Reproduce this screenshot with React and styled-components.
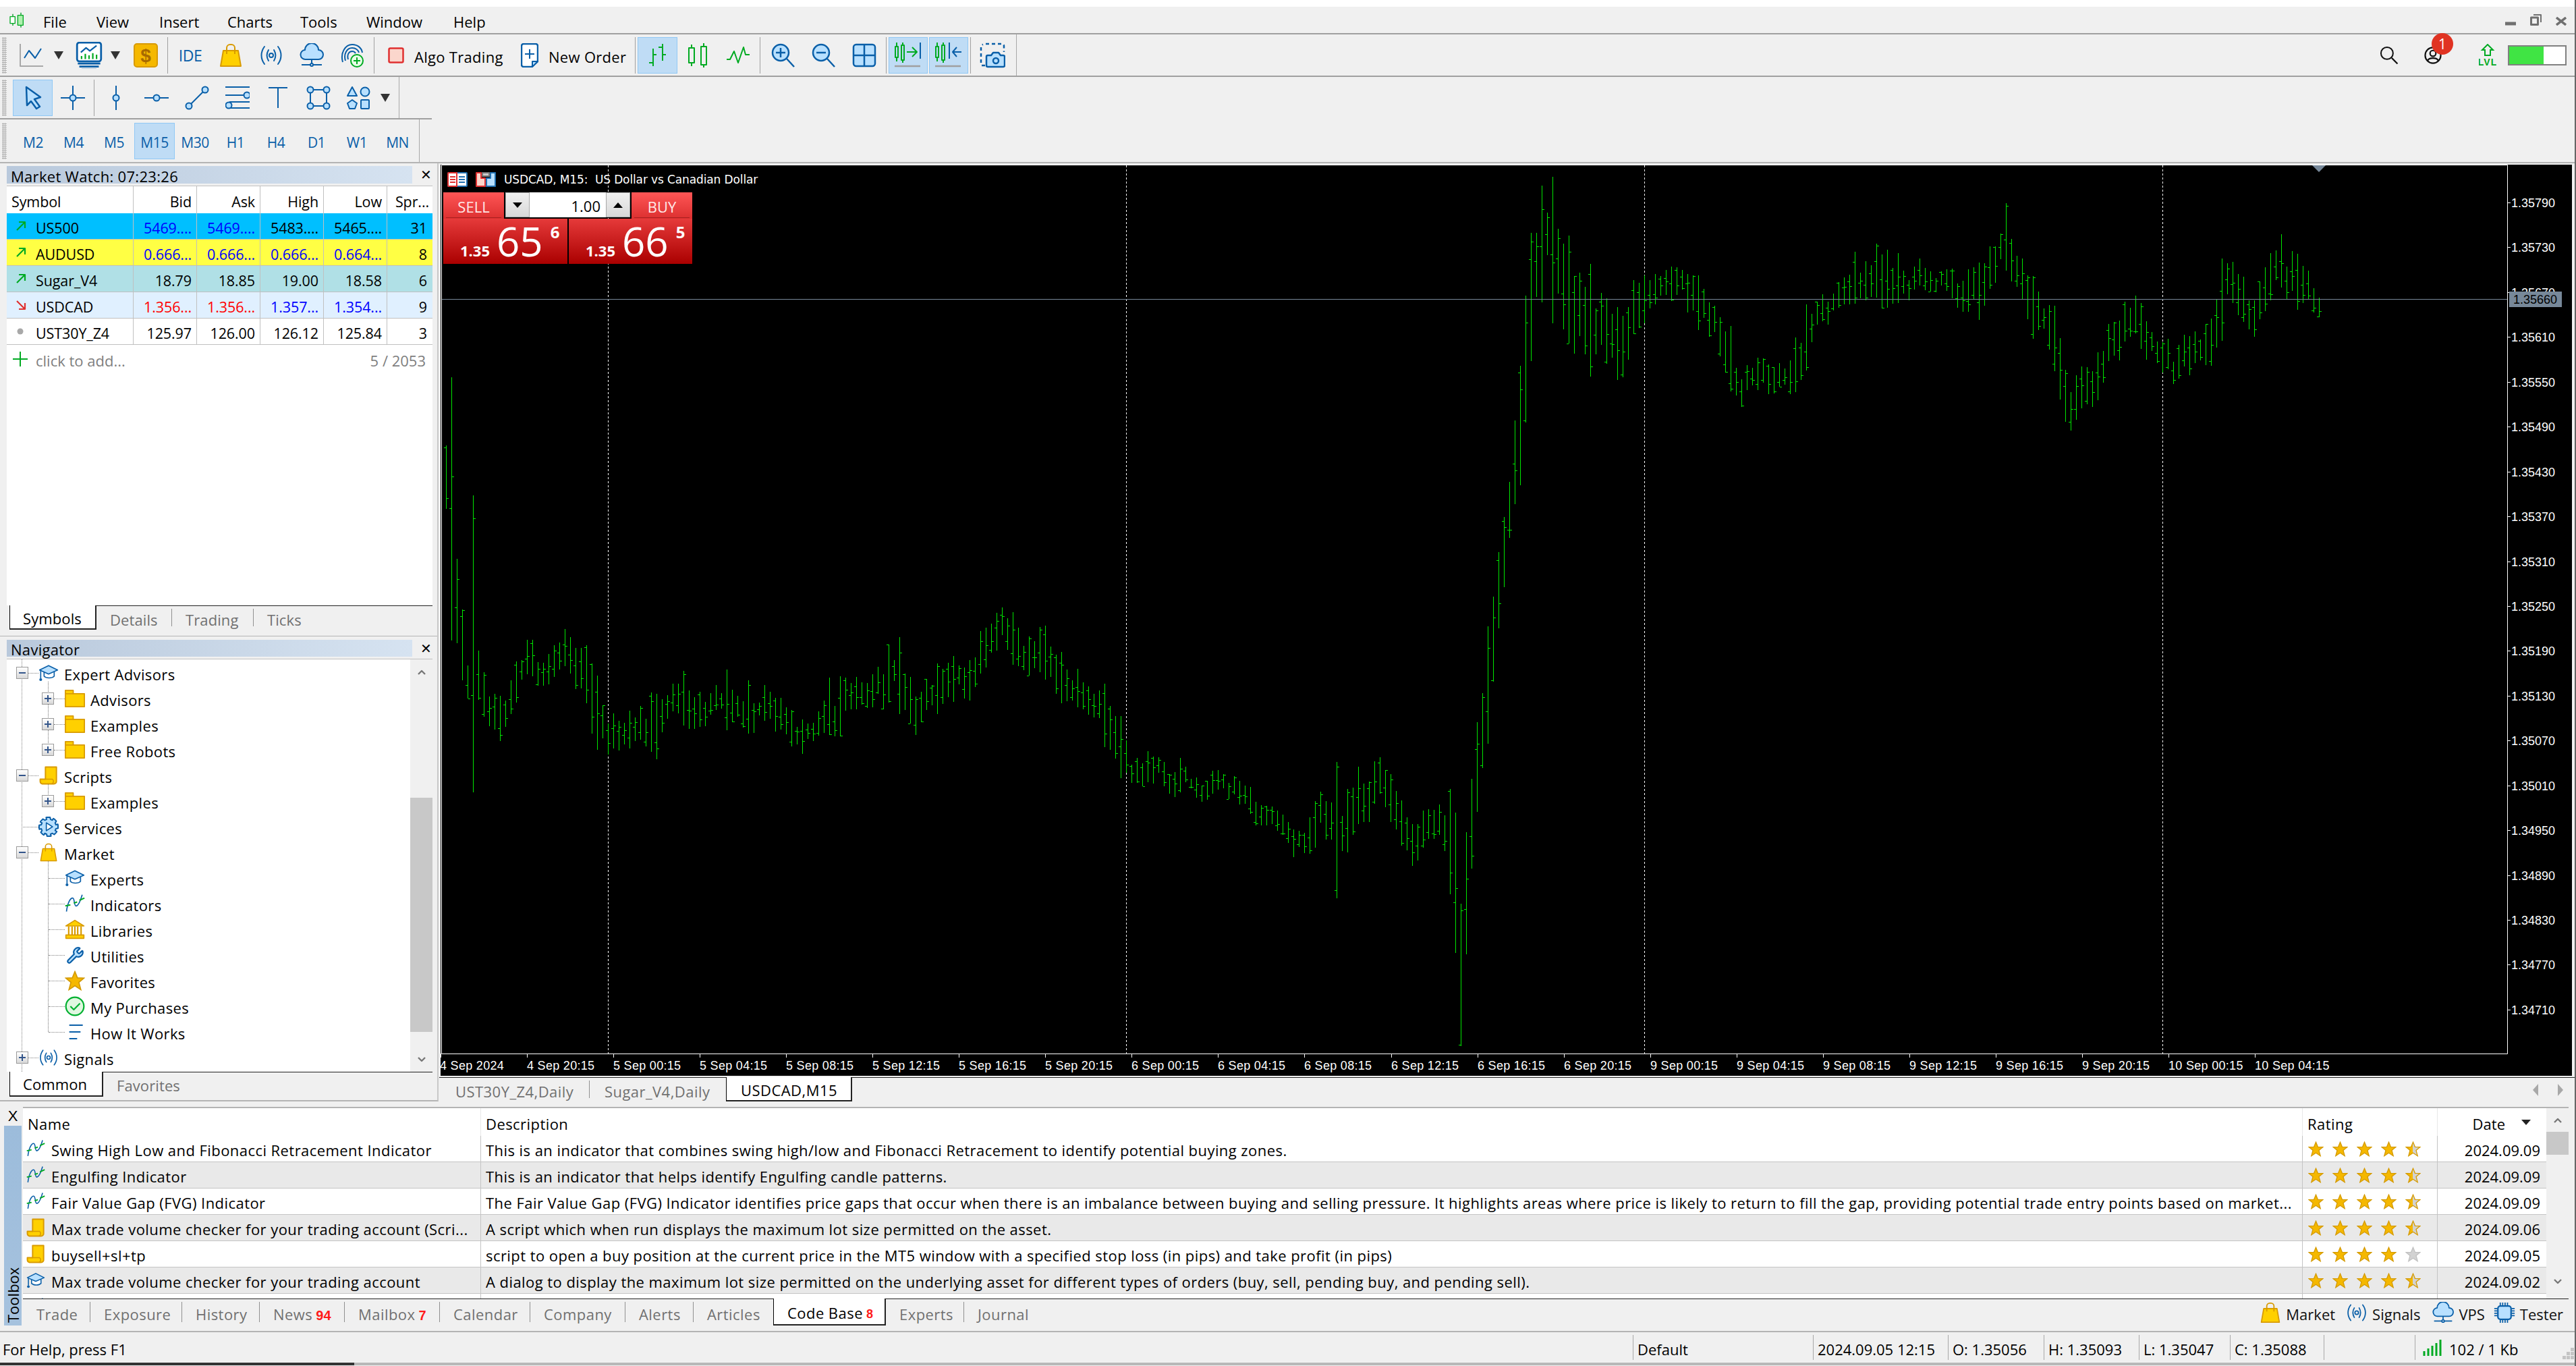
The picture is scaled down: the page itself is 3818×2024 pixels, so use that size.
import React from "react"
import styled, { createGlobalStyle } from "styled-components"
import { Wrench } from "lucide-react"

const UI_FONT = `"Open Sans", "Noto Sans", "Liberation Sans", sans-serif`
const BLUE = "#0a5fa8"
const SKY = "#b8e0ff"
const GREEN = "#00aa22"
const GOLD = "#ffd000"
const GOLD_LINE = "#d89a00"

const GlobalStyle = createGlobalStyle`
  html, body {
    margin: 0;
    padding: 0;
    background: #f0f0f0;
  }
  body {
    font-family: ${UI_FONT};
    font-size: 22px;
    color: #000;
    overflow: hidden;
  }
`

// window frame
const Window = styled.div`
  width: 3818px;
  height: 2024px;
  box-sizing: border-box;
  border-right: 2px solid #666;
  display: flex;
  flex-direction: column;
  background: #f0f0f0;
`
const TopStrip = styled.div`
  height: 10px;
  background: #fff;
`
const MenuBar = styled.div`
  height: 39px;
  box-sizing: border-box;
  display: flex;
  align-items: center;
  padding: 4px 0 0 13px;
`
const MenuItem = styled.span`
  font-size: 22px;
  width: ${p => p.$w}px;
  svg {
    display: block;
    margin-top: -4px;
  }
`
const WindowControls = styled.div`
  margin-left: auto;
  margin-right: 12px;
  display: flex;
  align-items: flex-end;
  gap: 21px;
  height: 20px;
  margin-top: -7px;
`

// toolbars
const ToolbarRow = styled.div`
  height: 65px;
  box-sizing: border-box;
  border-top: 2px solid #a0a0a0;
  border-bottom: 2px solid #a0a0a0;
  display: flex;
  align-items: stretch;
`
const Toolbar = styled.div`
  width: ${p => p.$w}px;
  height: ${p => p.$h || 61}px;
  box-sizing: border-box;
  display: flex;
  align-items: center;
  border-right: 1px solid #a8a8a8;
  flex: none;
`
const ToolbarStack = styled.div`
  height: 63px;
  box-sizing: border-box;
  border-bottom: ${p => (p.$last ? "none" : "2px solid #a0a0a0")};
  width: ${p => p.$w}px;
  display: flex;
`
const Grip = styled.div`
  width: 7px;
  height: 54px;
  margin: 0 ${p => p.$after}px 0 3px;
  flex: none;
  background-image: radial-gradient(#b0b0b0 1px, transparent 1.2px);
  background-size: 3px 3px;
`
const Tool = styled.div`
  width: ${p => p.$w || 60}px;
  height: 54px;
  box-sizing: border-box;
  flex: none;
  display: flex;
  align-items: center;
  justify-content: center;
  gap: 15px;
  margin-left: ${p => p.$ml || 0}px;
  background: ${p => (p.$active ? "#bfdcf5" : "transparent")};
  border: 1px solid ${p => (p.$active ? "#90c8f5" : "transparent")};
`
const TimeTool = styled(Tool)`
  color: ${BLUE};
  font-size: 21px;
  letter-spacing: -0.5px;
  padding-top: 4px;
`
const TextTool = styled(Tool)`
  justify-content: flex-start;
  padding: 4px 0 0 ${p => p.$pl}px;
  font-size: 22px;
  letter-spacing: 0.3px;
  svg {
    margin-top: -4px;
  }
`
const IdeLabel = styled.span`
  color: ${BLUE};
  font-size: 23px;
  letter-spacing: -0.5px;
`
const Separator = styled.div`
  width: 1px;
  height: 54px;
  background: #a0a0a0;
  flex: none;
  margin: 0 ${p => p.$r || 2}px 0 ${p => p.$l || 2}px;
`
const DropArrow = styled.div`
  width: 0;
  height: 0;
  border-left: 7px solid transparent;
  border-right: 7px solid transparent;
  border-top: 12px solid #333;
  margin: 0 ${p => p.$r}px 0 ${p => p.$l}px;
  flex: none;
`
const Actions = styled.div`
  margin-left: auto;
  padding-right: 12px;
  display: flex;
  align-items: center;
  height: 61px;
  box-sizing: border-box;
`
const UserWrap = styled.div`
  position: relative;
  width: 26px;
  height: 26px;
  margin: 0 55px 0 38px;
`
const Badge = styled.div`
  position: absolute;
  left: 11px;
  top: -20px;
  width: 32px;
  height: 32px;
  border-radius: 50%;
  background: #e03322;
  color: #fff;
  font-size: 21px;
  display: flex;
  align-items: center;
  justify-content: center;
`
const Level = styled.div`
  width: 87px;
  height: 30px;
  margin-left: 17px;
  box-sizing: border-box;
  border: 2px solid #808080;
  background: #fff;
`
const LevelFill = styled.div`
  height: 100%;
  background: #40e444;
`

// main area
const Main = styled.div`
  height: 1392px;
  display: flex;
  border-top: 2px solid #b4b4b4;
  box-sizing: border-box;
`
const Sidebar = styled.div`
  width: 650px;
  box-sizing: border-box;
  padding: 4px 7px 0 10px;
  border-right: 2px solid #c8c8c8;
  border-bottom: 2px solid #b4b4b4;
  flex: none;
  display: flex;
  flex-direction: column;
`
const PanelTitle = styled.div`
  height: ${p => p.$h}px;
  display: flex;
  align-items: center;
  flex: none;
  margin-bottom: 3px;
`
const TitleBar = styled.div`
  width: 604px;
  height: 100%;
  display: flex;
  align-items: center;
  padding: 3px 0 0 6px;
  box-sizing: border-box;
  font-size: 22px;
  letter-spacing: 0.3px;
  background: linear-gradient(90deg, #b9c9dc, #d6e3f1);
`
const CloseMark = styled.div`
  margin-left: 10px;
  font-family: "Liberation Sans", sans-serif;
  font-size: 20px;
  width: 20px;
  text-align: center;
`
const WatchBox = styled.div`
  height: 622px;
  background: #fff;
  border-top: 1px solid #c0c0c0;
  box-sizing: border-box;
  flex: none;
`
const WatchRow = styled.div`
  display: grid;
  grid-template-columns: 188px 94px 94px 94px 94px 69px;
  height: ${p => p.$h || 39}px;
  box-sizing: border-box;
  background: ${p => p.$bg || "#fff"};
  border-bottom: ${p => (p.$head ? "none" : "1px solid #c0c0c0")};
`
const WatchCell = styled.div`
  display: flex;
  align-items: center;
  justify-content: ${p => (p.$left ? "flex-start" : "flex-end")};
  padding: 4px ${p => (p.$left ? 0 : p.$pr || 7)}px 0 ${p => (p.$left ? p.$pl || 7 : 0)}px;
  color: ${p => p.$c || "#000"};
  border-right: ${p => (p.$end ? "none" : "1px solid #c0c0c0")};
  font-size: 21.5px;
  letter-spacing: -0.1px;
  white-space: nowrap;
  overflow: hidden;
`
const TrendIcon = styled.span`
  width: 30px;
  margin: -4px 0 0 6px;
  flex: none;
  display: flex;
  align-items: center;
`
const AddRow = styled.div`
  height: 42px;
  box-sizing: border-box;
  display: flex;
  align-items: center;
  color: #808080;
  padding: 4px 10px 0 9px;
  font-size: 22px;
`
const AddCount = styled.span`
  margin-left: auto;
`
const AddPlus = styled.span`
  width: 34px;
  display: flex;
  flex: none;
  margin-top: -4px;
`
const TabStrip = styled.div`
  height: ${p => p.$h || 36}px;
  flex: none;
  display: flex;
  align-items: stretch;
  box-sizing: border-box;
`
const Tab = styled.div`
  width: ${p => p.$w}px;
  box-sizing: border-box;
  display: flex;
  align-items: center;
  padding: ${p => p.$pt ?? 4}px 0 0 ${p => p.$pl || 20}px;
  margin-left: ${p => p.$ml || 0}px;
  font-size: 22px;
  letter-spacing: ${p => p.$ls ?? 0.45}px;
  white-space: nowrap;
  flex: none;
  color: ${p => (p.$active ? "#000" : "#707070")};
  background: ${p => (p.$active ? "#fff" : "transparent")};
  border-left: ${p => (p.$active ? "1px solid #000" : "none")};
  border-right: ${p => (p.$active ? "2px solid #222" : "none")};
  border-bottom: ${p => (p.$active ? "2px solid #222" : "none")};
  border-top: ${p => (p.$active ? "none" : "1px solid #222")};
  position: relative;
  &::after {
    content: "";
    display: ${p => (p.$sep ? "block" : "none")};
    position: absolute;
    right: 0;
    top: 4px;
    bottom: 5px;
    width: 1px;
    background: #909090;
  }
`
const TabFill = styled.div`
  flex: 1;
  border-top: 1px solid #222;
  display: flex;
  align-items: center;
  justify-content: flex-end;
`
const PanelGap = styled.div`
  height: 4px;
  margin: 0 -7px 5px -10px;
  border-bottom: 1px solid #b4b4b4;
  padding-top: 5px;
  flex: none;
`
const TreeBox = styled.div`
  height: 612px;
  flex: none;
  background: #fff;
  border-top: 1px solid #c0c0c0;
  box-sizing: border-box;
  display: flex;
  position: relative;
  overflow: hidden;
  &::before {
    content: "";
    position: absolute;
    left: 22px;
    top: 0;
    bottom: 0;
    border-left: 1px dotted #808080;
  }
`
const TreeList = styled.div`
  flex: 1;
  padding-top: 1px;
`
const Branch = styled.div`
  position: relative;
  &::before {
    content: "";
    position: absolute;
    left: 61px;
    top: -6px;
    bottom: 19px;
    border-left: 1px dotted #707070;
  }
`
const TreeRow = styled.div`
  height: 38px;
  box-sizing: border-box;
  padding-top: 4px;
  display: flex;
  align-items: center;
  font-size: 22px;
  letter-spacing: 0.35px;
  white-space: nowrap;
`
const TreeLead = styled.div`
  width: ${p => p.$w}px;
  padding-left: ${p => p.$pl}px;
  box-sizing: border-box;
  display: flex;
  align-items: center;
  flex: none;
  margin-top: -4px;
`
const Toggle = styled.div`
  width: 18px;
  height: 18px;
  box-sizing: border-box;
  flex: none;
  border: 1px solid #9a9a9a;
  background: linear-gradient(#fff, #d8d8d8);
  display: flex;
  align-items: center;
  justify-content: center;
  position: relative;
  z-index: 1;
`
const Connector = styled.div`
  flex: 1;
  height: 0;
  border-top: 1px dotted #808080;
`
const TreeIcon = styled.div`
  width: 30px;
  height: 30px;
  margin: -4px 8px 0 0;
  flex: none;
  display: flex;
  align-items: center;
  justify-content: center;
`
const ScrollBar = styled.div`
  width: ${p => p.$w}px;
  flex: none;
  background: #f0f0f0;
  display: flex;
  flex-direction: column;
  align-items: stretch;
`
const ScrollEnd = styled.div`
  height: ${p => p.$h}px;
  flex: none;
  display: flex;
  align-items: center;
  justify-content: center;
`
const ScrollTrack = styled.div`
  flex: 1;
  display: flex;
  flex-direction: column;
`
const ScrollThumb = styled.div`
  height: ${p => p.$h}px;
  margin-top: ${p => p.$top}px;
  background: #c8c8c8;
  flex: none;
`

// chart
const ChartColumn = styled.div`
  flex: 1;
  margin-left: 3px;
  padding-top: 2px;
  display: flex;
  flex-direction: column;
  min-width: 0;
`
const ChartPane = styled.div`
  width: 3159px;
  height: 1350px;
  background: #000;
  position: relative;
  flex: none;
`
const ChartSvg = styled.svg`
  display: block;
  font-family: "Liberation Sans", sans-serif;
`
const ChartTitle = styled.div`
  position: absolute;
  left: 10px;
  top: 10px;
  display: flex;
  align-items: center;
  gap: 12px;
  color: #fff;
  font-family: "DejaVu Sans", sans-serif;
  font-size: 17px;
  letter-spacing: -0.12px;
  white-space: pre;
  height: 24px;
`
const TradePanel = styled.div`
  position: absolute;
  left: 4px;
  top: 41px;
  width: 369px;
  display: flex;
  flex-direction: column;
  font-family: ${UI_FONT};
  color: #ffe8e8;
`
const TradeTop = styled.div`
  height: 39px;
  display: flex;
  gap: 2px;
`
const SideButton = styled.div`
  width: 90px;
  padding: 0 4px;
  box-sizing: border-box;
  background: linear-gradient(#ff5656, #dc3030);
  display: flex;
  justify-content: center;
`
const SideLabel = styled.div`
  width: 100%;
  text-align: center;
  font-size: 22px;
  line-height: 42px;
  height: 38px;
  box-sizing: border-box;
  border-bottom: 1px solid #a82020;
`
const Spinner = styled.div`
  width: 185px;
  height: 37px;
  display: flex;
  background: #fff;
`
const SpinButton = styled.div`
  width: 36px;
  flex: none;
  background: linear-gradient(#f0f0f0, #d8d8d8);
  display: flex;
  align-items: center;
  justify-content: center;
  box-sizing: border-box;
  border: 1px solid #a8a8a8;
`
const SpinValue = styled.div`
  flex: 1;
  text-align: right;
  padding-right: 8px;
  color: #000;
  font-size: 22px;
  line-height: 40px;
`
const TradePrices = styled.div`
  height: 67px;
  display: flex;
  gap: 2px;
`
const PriceBox = styled.div`
  width: ${p => p.$w}px;
  box-sizing: border-box;
  padding-left: 25px;
  background: linear-gradient(#e63a3a, #aa0000);
  display: flex;
  align-items: baseline;
  color: #fff;
  height: 100%;
`
const PriceSmall = styled.span`
  font-size: 22px;
  font-weight: 700;
  margin-right: 10px;
  line-height: 66px;
`
const PriceBig = styled.span`
  font-size: 60px;
  line-height: 66px;
`
const PriceSup = styled.span`
  font-size: 24px;
  font-weight: 700;
  margin-left: 11px;
  align-self: flex-start;
  line-height: 30px;
  margin-top: 5px;
`
const ChartTabs = styled(TabStrip)`
  margin-top: 2px;
  margin-left: -2px;
`
const NavArrows = styled.div`
  display: flex;
  gap: 29px;
  margin-right: 16px;
`

// toolbox
const ToolboxArea = styled.div`
  height: 340px;
  display: flex;
  flex: none;
  box-sizing: border-box;
  padding-top: 8px;
`
const ToolboxSide = styled.div`
  width: 34px;
  flex: none;
  display: flex;
  flex-direction: column;
  align-items: center;
`
const SideClose = styled.div`
  height: 28px;
  font-size: 22px;
  line-height: 28px;
  font-family: "Liberation Sans", sans-serif;
  margin-left: 4px;
`
const SideTitle = styled.div`
  width: 26px;
  height: 296px;
  margin-left: 4px;
  background: linear-gradient(#a6c2de, #9cbcdb);
  display: flex;
  align-items: center;
  justify-content: flex-start;
  writing-mode: vertical-rl;
  transform: rotate(180deg);
  font-size: 22px;
  padding-top: 4px;
  box-sizing: border-box;
`
const ToolboxBody = styled.div`
  flex: 1;
  display: flex;
  flex-direction: column;
  min-width: 0;
  padding-right: 9px;
`
const TableArea = styled.div`
  height: 284px;
  display: flex;
  border-top: 2px solid #b4b4b4;
  background: #fff;
  overflow: hidden;
  box-sizing: border-box;
  flex: none;
`
const ToolboxTable = styled.div`
  width: 3740px;
  flex: none;
`
const GridRow = styled.div`
  display: grid;
  grid-template-columns: 679px 2700px 200px 161px;
  height: ${p => p.$h || 39}px;
  box-sizing: border-box;
  background: ${p => (p.$alt ? "#e9e9e9" : "#fff")};
  border-bottom: ${p => (p.$head ? "none" : "1px solid #c4c4c4")};
`
const GridCell = styled.div`
  display: flex;
  align-items: center;
  box-sizing: border-box;
  padding: 4px ${p => p.$pr || 0}px 0 ${p => p.$pl || 7}px;
  justify-content: ${p => (p.$right ? "flex-end" : "flex-start")};
  border-right: ${p => (p.$end ? "none" : `1px solid ${p.$head ? "#e8e8e8" : "#c4c4c4"}`)};
  font-size: 22px;
  letter-spacing: ${p => (p.$end ? 0 : 0.44)}px;
  white-space: nowrap;
  overflow: hidden;
`
const RowIcon = styled.span`
  width: 28px;
  margin: -4px 9px 0 -2px;
  flex: none;
  display: flex;
`
const SortArrow = styled.span`
  width: 0;
  height: 0;
  border-left: 7px solid transparent;
  border-right: 7px solid transparent;
  border-top: 8px solid #222;
  margin: -4px 14px 0 24px;
`
const Stars = styled.div`
  display: flex;
  gap: 13px;
  margin: -4px 0 0 1px;
`
const TabCount = styled.b`
  color: #ff1a1a;
  font-family: "Liberation Sans", sans-serif;
  font-size: ${p => p.$s || 20}px;
  letter-spacing: 0;
  margin-left: 5px;
  margin-top: 5px;
`
const ToolLinks = styled.div`
  display: flex;
  align-items: center;
  font-size: 22px;
  height: 100%;
  color: #111;
  margin-right: 8px;
  padding-top: 4px;
  box-sizing: border-box;
`
const ToolLink = styled.div`
  display: flex;
  align-items: center;
  gap: 7px;
  margin-left: ${p => p.$ml || 0}px;
  svg {
    margin-top: -4px;
  }
`

// status bar
const StatusBar = styled.div`
  height: 47px;
  flex: none;
  box-sizing: border-box;
  border-top: 2px solid #b4b4b4;
  display: flex;
  align-items: center;
  font-size: 22px;
`
const StatusCell = styled.div`
  width: ${p => p.$w}px;
  flex: ${p => (p.$w ? "none" : "1")};
  height: 37px;
  box-sizing: border-box;
  display: flex;
  align-items: center;
  gap: 11px;
  padding: 4px 0 0 ${p => p.$pl || 6}px;
  border-left: ${p => (p.$first ? "none" : "1px solid #a8a8a8")};
  white-space: nowrap;
  svg {
    margin-top: -4px;
  }
`
const SizeGripWrap = styled.div`
  margin-left: auto;
  align-self: flex-end;
  display: flex;
`
const BottomEdge = styled.div`
  height: 4px;
  background: #b8b8b8;
`
const BottomDark = styled.div`
  width: 525px;
  height: 100%;
  background: #333;
`

// icons
const Ico = ({ s = 36, w, h, vb = "0 0 36 36", children }) => (
  <svg width={w || s} height={h || s} viewBox={vb} fill="none" strokeWidth="2" strokeLinejoin="round">
    {children}
  </svg>
)

const Logo = () => (
  <Ico w={24} h={34}>
    <path d="M9 4V30M27 1V34" stroke="#009922" />
    <rect x="3" y="10" width="11" height="15" fill="#fff" stroke="#00aa22" />
    <rect x="20" y="7" width="12" height="22" fill="#b0f0b0" stroke="#00aa22" />
  </Ico>
)
const LineChartIcon = () => (
  <Ico>
    <path d="M1 1V34H35" stroke="#a8a8a8" />
    <path d="M7 22L14 11L23 22L32 8" stroke={BLUE} />
  </Ico>
)
const MonitorIcon = () => (
  <Ico s={40}>
    <rect x="2" y="1" width="32" height="25" rx="3" fill="#fff" stroke={BLUE} strokeWidth="2.5" />
    <path d="M7 14L14 8L19 12L28 5" stroke={BLUE} />
    <path d="M8 23V19M13 23V16M18 23V18M23 23V15M28 23V17" stroke={GREEN} />
    <path d="M3 29H33M5 33H31M8 37H28" stroke={BLUE} strokeWidth="2.5" />
  </Ico>
)
const CoinIcon = () => (
  <Ico>
    <rect x="1" y="1" width="34" height="34" rx="4" fill="#f5b800" stroke="#d89a00" />
    <text x="18" y="28" textAnchor="middle" fontSize="28" fontWeight="700" fill="#a86a00" stroke="none" fontFamily="Liberation Sans">$</text>
  </Ico>
)
const BagIcon = ({ s = 36 }) => (
  <Ico s={s}>
    <path d="M7 11H29L33 34H3Z" fill={GOLD} stroke={GOLD_LINE} />
    <path d="M12 16V7a5 5 0 0 1 5-5h2a5 5 0 0 1 5 5V16" stroke={GOLD_LINE} />
  </Ico>
)
const SignalIcon = ({ s = 36 }) => (
  <Ico w={s} h={s} vb="0 0 36 36">
    <path d="M8 5C2 13 2 23 8 31M14 10C11 15 11 21 14 26M28 5C34 13 34 23 28 31M22 10C25 15 25 21 22 26" stroke={BLUE} strokeLinecap="round" />
    <circle cx="18" cy="18" r="3" stroke={BLUE} />
  </Ico>
)
const CloudIcon = ({ s = 36 }) => (
  <Ico s={s}>
    <path d="M9 24a7 7 0 0 1-1-14 10 10 0 0 1 20 0 7 7 0 0 1 0 14Z" fill={SKY} stroke={BLUE} />
    <path d="M18 24V31M3 32H33" stroke={BLUE} />
    <circle cx="18" cy="32" r="2" fill="#fff" stroke={BLUE} />
  </Ico>
)
const FingerIcon = () => (
  <Ico>
    <path d="M4 28C0 14 8 2 18 2C26 2 32 7 33 14M8 26C5 16 10 7 18 7C23 7 27 10 28 14M12 24C10 17 13 12 18 12C20 12 22 13 23 15" stroke={BLUE} />
    <circle cx="25" cy="26" r="9" fill="#e8ffe8" stroke={GREEN} />
    <path d="M25 21V31M20 26H30" stroke={GREEN} />
  </Ico>
)
const AlgoBox = () => (
  <Ico s={24} vb="0 0 24 24">
    <rect x="1.5" y="1.5" width="21" height="21" rx="2" fill="#fbd6cc" stroke="#e03030" strokeWidth="2.5" />
  </Ico>
)
const OrderIcon = () => (
  <Ico w={26} h={36} vb="0 0 26 36">
    <path d="M4 1H22a3 3 0 0 1 3 3V27L16 35H4a3 3 0 0 1-3-3V4a3 3 0 0 1 3-3Z" fill="#fff" stroke={BLUE} strokeWidth="2.5" />
    <path d="M13 9V23M6 16H20" stroke={BLUE} />
    <path d="M25 27H17V35Z" fill={SKY} stroke={BLUE} />
  </Ico>
)
const BarsIcon = () => (
  <Ico>
    <path d="M11 8V34M5 29H11M11 17H16M25 1V26M19 6H25M25 17H30" stroke={GREEN} />
  </Ico>
)
const CandleIcon = () => (
  <Ico>
    <path d="M9 2V34M27 0V36" stroke={GREEN} />
    <rect x="5" y="7" width="8" height="22" fill="#f0f0f0" stroke={GREEN} />
    <rect x="23" y="5" width="8" height="27" fill="#f0f0f0" stroke={GREEN} />
  </Ico>
)
const WaveIcon = () => (
  <Ico>
    <path d="M1 24H6L12 12L18 29L26 6L29 17H35" stroke={GREEN} />
  </Ico>
)
const ZoomIcon = ({ plus }) => (
  <Ico>
    <circle cx="14" cy="14" r="12" fill={SKY} stroke={BLUE} strokeWidth="2.5" />
    <path d={plus ? "M14 7V21M7 14H21" : "M7 14H21"} stroke={BLUE} strokeWidth="2.5" />
    <path d="M23 23L34 35" stroke={BLUE} strokeWidth="2.5" />
  </Ico>
)
const TileIcon = () => (
  <Ico>
    <rect x="2" y="2" width="32" height="32" rx="4" fill={SKY} stroke={BLUE} strokeWidth="2.5" />
    <path d="M18 2V34M2 18H34" stroke={BLUE} strokeWidth="2.5" />
  </Ico>
)
const ShiftIcon = ({ back }) => (
  <Ico w={40} h={38} vb="0 0 40 38">
    <path d="M3 0V28M12 0V30" stroke={GREEN} />
    <rect x="1" y="6" width="4" height="16" fill="#bfdcf5" stroke={GREEN} />
    <rect x="10" y="4" width="4" height="22" fill="#bfdcf5" stroke={GREEN} />
    {back ? (
      <>
        <path d="M21 0V24" stroke={BLUE} />
        <path d="M26 14H39M32 7L26 14L32 21" stroke={BLUE} />
      </>
    ) : (
      <>
        <path d="M38 0V24" stroke={BLUE} />
        <path d="M18 14H32M26 7L33 14L26 21" stroke={GREEN} />
      </>
    )}
    <path d="M0 35H38" stroke="#a0a0a0" strokeWidth="2.5" />
  </Ico>
)
const ShotIcon = () => (
  <Ico w={38} h={38} vb="0 0 38 38">
    <path d="M9 2H33a3 3 0 0 1 3 3V14M2 30V7a4 4 0 0 1 3-4M3 34H8" stroke={BLUE} strokeWidth="2.5" strokeDasharray="5 4" />
    <path d="M12 19H17L20 15H28L31 19H35a2 2 0 0 1 2 2V34a2 2 0 0 1-2 2H12a2 2 0 0 1-2-2V21a2 2 0 0 1 2-2Z" fill={SKY} stroke={BLUE} strokeWidth="2.5" />
    <circle cx="24" cy="27" r="4" stroke={BLUE} strokeWidth="2.5" />
  </Ico>
)
const CursorIcon = () => (
  <Ico>
    <path d="M8 2L29 17L20 20L28 31L23 34L15 23L9 29Z" fill={SKY} stroke={BLUE} strokeWidth="2.5" />
  </Ico>
)
const CrossIcon = () => (
  <Ico>
    <path d="M18 0V36M0 18H36" stroke={BLUE} />
    <circle cx="18" cy="18" r="4.5" fill={SKY} stroke={BLUE} />
  </Ico>
)
const VLineIcon = () => (
  <Ico>
    <path d="M18 0V36" stroke={BLUE} />
    <circle cx="18" cy="18" r="4.5" fill={SKY} stroke={BLUE} />
  </Ico>
)
const HLineIcon = () => (
  <Ico>
    <path d="M0 18H36" stroke={BLUE} />
    <circle cx="18" cy="18" r="4.5" fill={SKY} stroke={BLUE} />
  </Ico>
)
const TrendIconTool = () => (
  <Ico>
    <path d="M6 30L30 6" stroke={BLUE} />
    <circle cx="6" cy="30" r="4.5" fill={SKY} stroke={BLUE} />
    <circle cx="30" cy="6" r="4.5" fill={SKY} stroke={BLUE} />
  </Ico>
)
const ChannelIcon = () => (
  <Ico>
    <path d="M0 2H36M0 14H30M6 24H36M6 33H36" stroke={BLUE} />
    <circle cx="32" cy="14" r="4.5" fill={SKY} stroke={BLUE} />
    <circle cx="5" cy="29" r="4.5" fill={SKY} stroke={BLUE} />
  </Ico>
)
const TIcon = () => (
  <Ico>
    <path d="M4 3H32M18 3V33" stroke={BLUE} />
  </Ico>
)
const RectIcon = () => (
  <Ico>
    <rect x="6" y="6" width="24" height="24" stroke={BLUE} />
    <circle cx="6" cy="6" r="4.5" fill={SKY} stroke={BLUE} />
    <circle cx="30" cy="6" r="4.5" fill={SKY} stroke={BLUE} />
    <circle cx="6" cy="30" r="4.5" fill={SKY} stroke={BLUE} />
    <circle cx="30" cy="30" r="4.5" fill={SKY} stroke={BLUE} />
  </Ico>
)
const ShapesIcon = () => (
  <Ico>
    <path d="M8 2L15 15H1Z" fill={SKY} stroke={BLUE} />
    <circle cx="27" cy="9" r="6.5" fill={SKY} stroke={BLUE} />
    <path d="M8 21L15 26L12 34H4L1 26Z" fill={SKY} stroke={BLUE} />
    <rect x="21" y="21" width="12" height="13" rx="1" fill={SKY} stroke={BLUE} />
  </Ico>
)
const SearchIcon = () => (
  <Ico s={28}>
    <circle cx="14" cy="14" r="11.5" stroke="#111" strokeWidth="2.6" />
    <path d="M23 23L34 34" stroke="#111" strokeWidth="2.8" />
  </Ico>
)
const UserIcon = () => (
  <Ico s={26}>
    <circle cx="18" cy="18" r="16" stroke="#111" strokeWidth="3" />
    <circle cx="18" cy="14" r="6" stroke="#111" strokeWidth="3" />
    <path d="M7 29C10 22 26 22 29 29" stroke="#111" strokeWidth="3" />
  </Ico>
)
const LvlIcon = () => (
  <svg width="26" height="34" viewBox="0 0 26 34" fill="none" strokeWidth="2">
    <path d="M13 1L21 9H17V17H9V9H5Z" stroke={GREEN} />
    <text x="13" y="32" textAnchor="middle" fontFamily="Liberation Sans" fontWeight="700" fontSize="14" letterSpacing="1" fill={GREEN}>LVL</text>
  </svg>
)
const MinimizeIcon = () => (
  <Ico w={16} h={6} vb="0 0 16 6"><rect width="16" height="5" y="0.5" fill="#707070" /></Ico>
)
const RestoreIcon = () => (
  <Ico s={17} vb="0 0 17 17">
    <path d="M5 1H16V12" stroke="#707070" />
    <rect x="1.5" y="5" width="10" height="10.5" stroke="#707070" strokeWidth="3" />
  </Ico>
)
const CloseIcon = () => (
  <Ico w={16} h={13} vb="0 0 16 13">
    <path d="M1 1L15 12M15 1L1 12" stroke="#707070" strokeWidth="3.4" />
  </Ico>
)
const UpIcon = ({ dir = "up" }) => (
  <Ico w={12} h={8} vb="0 0 12 8">
    <path d={dir === "up" ? "M1 7L6 2L11 7" : "M1 1L6 6L11 1"} stroke="#777" strokeWidth="2.4" />
  </Ico>
)
const ArrowMark = ({ kind }) =>
  kind === "dot" ? (
    <Ico s={14} vb="0 0 14 14"><circle cx="7" cy="7" r="4.5" fill="#a8a8a8" /></Ico>
  ) : kind === "down" ? (
    <Ico s={16} vb="0 0 16 16"><path d="M2 2L14 14M14 5V14H5" stroke="#e03030" strokeWidth="2.2" /></Ico>
  ) : (
    <Ico s={16} vb="0 0 16 16"><path d="M2 14L14 2M5 2H14V11" stroke={GREEN} strokeWidth="2.2" /></Ico>
  )
const PlusMark = () => (
  <Ico s={22} vb="0 0 22 22"><path d="M11 0V22M0 11H22" stroke={GREEN} strokeWidth="2" /></Ico>
)
const ToggleMark = ({ open }) => (
  <Ico s={12} vb="0 0 12 12">
    <path d={open ? "M1 6H11" : "M6 1V11M1 6H11"} stroke="#33558a" strokeWidth="2" />
  </Ico>
)
const CapIcon = ({ s = 30 }) => (
  <Ico s={s} vb="0 0 36 36">
    <path d="M10 16V24C14 28 24 28 28 24V16" fill="#fff" stroke={BLUE} />
    <path d="M2 13L18 5L34 13L18 20Z" fill={SKY} stroke={BLUE} />
    <path d="M4 14V28" stroke={BLUE} />
    <circle cx="4" cy="30" r="2.5" fill={BLUE} />
  </Ico>
)
const FolderIcon = () => (
  <Ico w={30} h={26} vb="0 0 36 31">
    <path d="M1 1H15V7H35V30H1Z" fill={GOLD} stroke={GOLD_LINE} strokeWidth="2.2" />
    <path d="M1 7H15" stroke={GOLD_LINE} />
  </Ico>
)
const ScrollIcon = ({ s = 28 }) => (
  <Ico s={s} vb="0 0 36 36">
    <path d="M12 2H33V28a5 5 0 0 1-5 6H6a5 5 0 0 1-4-5V25H12Z" fill={GOLD} stroke={GOLD_LINE} strokeWidth="2.5" />
    <path d="M24 34a5 5 0 0 0 1-9H12" stroke={GOLD_LINE} />
  </Ico>
)
const gearPath = (() => {
  const pts = []
  for (let i = 0; i < 8; i++) {
    const a = (i * Math.PI) / 4
    ;[[-0.26, 17], [-0.16, 17], [0.16, 17], [0.26, 13.5], [0.52, 13.5]].forEach(([d, r]) => {
      pts.push(`${(18 + r * Math.cos(a + d)).toFixed(1)} ${(18 + r * Math.sin(a + d)).toFixed(1)}`)
    })
  }
  return "M" + pts.join("L") + "Z"
})()
const GearIcon = () => (
  <Ico s={30}>
    <path d={gearPath} fill={SKY} stroke={BLUE} strokeWidth="2.4" />
    <path d="M14 11L25 18L14 25Z" fill="#fff" stroke={BLUE} />
  </Ico>
)
const IndicatorIcon = ({ s = 30 }) => (
  <Ico s={s}>
    <path d="M3 32C5 16 10 8 14 8S16 22 20 22S28 12 31 2" stroke={BLUE} />
    <path d="M1 22L10 20M16 17L22 15M26 12L35 8" stroke={GREEN} strokeWidth="2.4" />
  </Ico>
)
const BankIcon = () => (
  <Ico s={30}>
    <path d="M18 2L34 12H2Z" fill={GOLD} stroke={GOLD_LINE} />
    <rect x="2" y="28" width="32" height="6" fill={GOLD} stroke={GOLD_LINE} />
    <path d="M7 13V28M13 13V28M18 13V28M23 13V28M29 13V28" stroke={GOLD_LINE} strokeWidth="2.6" />
  </Ico>
)
const StarIcon = ({ kind = "full", s = 23 }) => (
  <svg width={s} height={s} viewBox="0 0 36 36">
    <defs>
      <linearGradient id={`st-${kind}`}>
        <stop offset="50%" stopColor={kind === "empty" ? "#d2d2d2" : "#f5b800"} />
        <stop offset="50%" stopColor={kind === "full" ? "#f5b800" : "#d2d2d2"} />
      </linearGradient>
    </defs>
    <polygon
      points="18,2 22.5,13 34,13.5 25,21 28.5,34 18,27 7.5,34 11,21 2,13.5 13.5,13"
      fill={`url(#st-${kind})`}
      stroke={kind === "empty" ? "#c0c0c0" : "#d49a00"}
      strokeWidth="2"
    />
  </svg>
)
const CheckIcon = () => (
  <Ico s={30}>
    <circle cx="18" cy="18" r="16" fill="#e0f7e0" stroke="#00b030" strokeWidth="2.6" />
    <path d="M10 18L16 24L27 13" stroke="#00b030" strokeWidth="2.6" />
  </Ico>
)
const ListIcon = () => (
  <Ico s={30}>
    <path d="M8 6H32M8 18H28M8 30H22" stroke={BLUE} strokeWidth="2.6" />
  </Ico>
)
const ChipIcon = () => (
  <Ico s={32}>
    <rect x="7" y="7" width="22" height="22" rx="4" fill={SKY} stroke={BLUE} strokeWidth="2.5" />
    <path d="M11 1V6M15 1V6M19 1V6M23 1V6M11 30V35M15 30V35M19 30V35M23 30V35M1 11H6M1 15H6M1 19H6M1 23H6M30 11H35M30 15H35M30 19H35M30 23H35" stroke={BLUE} />
  </Ico>
)
const SignalBars = () => (
  <Ico w={28} h={24} vb="0 0 28 24">
    <path d="M2 24V17M8 24V13M14 24V9M20 24V5M26 24V0" stroke={GREEN} strokeWidth="3" />
  </Ico>
)
const SizeGrip = () => (
  <Ico w={18} h={18} vb="0 0 18 18">
    <path d="M12 0H17V5H12ZM6 6H11V11H6ZM12 6H17V11H12ZM0 12H5V17H0ZM6 12H11V17H6ZM12 12H17V17H12Z" fill="#c4c4c4" />
  </Ico>
)
const FlagIcon = () => (
  <Ico w={30} h={22} vb="0 0 30 22">
    <rect x="1" y="1" width="28" height="20" rx="1" fill="#fff" stroke="#2070b0" />
    <path d="M1 2a1 1 0 0 1 1-1H14V21H2a1 1 0 0 1-1-1Z" fill="#fff" stroke="#e03030" />
    <path d="M4 7H12M4 11H12M4 15H12" stroke="#e03030" />
    <path d="M17 7H26M17 11H26M17 15H26" stroke="#2070b0" />
  </Ico>
)
const SaveIcon = () => (
  <Ico w={30} h={22} vb="0 0 30 22">
    <path d="M1 1H8V9H14V21H1Z" fill="#fcd6cc" stroke="#e03030" />
    <path d="M22 9V1H29V21H16V9Z" fill={SKY} stroke="#2070b0" />
    <rect x="10" y="1" width="10" height="5" fill="#ccc" stroke="#777" />
  </Ico>
)
const Caret = ({ up, color = "#000" }) => (
  <svg width="14" height="8" viewBox="0 0 14 8">
    <path d={up ? "M7 0L14 8H0Z" : "M0 0H14L7 8Z"} fill={color} />
  </svg>
)
const SideArrow = ({ left }) => (
  <svg width="9" height="18" viewBox="0 0 9 18">
    <path d={left ? "M9 0V18L1 9Z" : "M0 0V18L8 9Z"} fill="#a8a8a8" />
  </svg>
)

// chart data: price path read off the picture, in 1568 wide coordinates
const SCALE = 2.435
const PATH = [
  [270, 300], [274, 290], [278, 360], [285, 425], [292, 415], [300, 445], [310, 430], [320, 405], [330, 420],
  [345, 402], [360, 430], [370, 455], [385, 450], [400, 440], [415, 425], [430, 440], [450, 430], [475, 435],
  [490, 450], [500, 445], [515, 425], [530, 425], [548, 410], [560, 430], [570, 425], [590, 420], [600, 398],
  [612, 380], [625, 402], [640, 410], [655, 425], [670, 432], [685, 465], [700, 470], [715, 480], [735, 475],
  [750, 482], [765, 490], [780, 500], [795, 515], [805, 492], [815, 515], [825, 490], [840, 465], [850, 490],
  [860, 515], [875, 492], [885, 510], [890, 590], [897, 490], [905, 420], [915, 330], [925, 265], [935, 155],
  [945, 135], [955, 185], [970, 195], [985, 208], [1000, 178], [1015, 172], [1030, 185], [1045, 200], [1060, 235],
  [1075, 230], [1095, 225], [1105, 195], [1120, 182], [1135, 165], [1150, 180], [1165, 175], [1185, 172], [1205, 180],
  [1220, 148], [1235, 190], [1250, 205], [1260, 262], [1272, 240], [1285, 215], [1300, 195], [1310, 220], [1325, 225],
  [1345, 205], [1358, 160], [1370, 185], [1385, 160], [1395, 170], [1412, 182],
]
const SPIKES = [
  [668, 560, 950],
  [700, 735, 1175],
  [1985, 1130, 1332],
  [2167, 1340, 1551],
  [2303, 263, 480],
]
const pathAt = ov => {
  for (let i = 1; i < PATH.length; i++) {
    if (ov <= PATH[i][0]) {
      const [x0, y0] = PATH[i - 1]
      const [x1, y1] = PATH[i]
      return y0 + ((y1 - y0) * (ov - x0)) / (x1 - x0)
    }
  }
  return PATH[PATH.length - 1][1]
}
const barsPath = (() => {
  let seed = 7741
  const rnd = () => (seed = (seed * 16807) % 2147483647) / 2147483647
  let d = ""
  let wander = 0
  for (let x = 663; x <= 3439; x += 8) {
    const ov = x / SCALE
    wander = wander * 0.8 + (rnd() - 0.5) * 26
    const c = pathAt(ov) * SCALE + wander
    const vol = ov > 925 && ov < 1000 ? 2 : ov > 700 && ov < 800 ? 0.7 : 1
    const slope = Math.abs(pathAt(ov + 3.3) - pathAt(ov)) * SCALE
    const burst = rnd() < 0.14 ? 22 : 0
    let hi = c - (7 + rnd() * 22 + burst) * vol - slope * 0.6
    let lo = c + (7 + rnd() * 22 + burst * rnd()) * vol + slope * 0.6
    const spike = SPIKES.find(s => Math.abs(s[0] - x) < 4)
    if (spike) {
      hi = spike[1]
      lo = spike[2]
    }
    const o = Math.round(lo + rnd() * (hi - lo)) + 0.5
    const e = Math.round(lo + rnd() * (hi - lo)) + 0.5
    d += `M${x + 0.5} ${Math.round(hi)}V${Math.round(lo)}M${x - 3} ${o}H${x}M${x + 1} ${e}H${x + 4}`
  }
  return d
})()

const PRICE_LABELS = ["1.35790", "1.35730", "1.35670", "1.35610", "1.35550", "1.35490", "1.35430", "1.35370", "1.35310", "1.35250", "1.35190", "1.35130", "1.35070", "1.35010", "1.34950", "1.34890", "1.34830", "1.34770", "1.34710"]
const TIME_LABELS = ["4 Sep 2024", "4 Sep 20:15", "5 Sep 00:15", "5 Sep 04:15", "5 Sep 08:15", "5 Sep 12:15", "5 Sep 16:15", "5 Sep 20:15", "6 Sep 00:15", "6 Sep 04:15", "6 Sep 08:15", "6 Sep 12:15", "6 Sep 16:15", "6 Sep 20:15", "9 Sep 00:15", "9 Sep 04:15", "9 Sep 08:15", "9 Sep 12:15", "9 Sep 16:15", "9 Sep 20:15", "10 Sep 00:15", "10 Sep 04:15"]

const PriceChart = () => (
  <ChartSvg width="3159" height="1350" viewBox="655 245 3159 1350">
    {[903, 1671, 2439, 3207].map(x => (
      <path key={x} d={`M${x + 0.5} 246V1562`} stroke="#fff" strokeDasharray="3 3" />
    ))}
    <path d={barsPath} stroke="#00e600" fill="none" />
    <path d="M656 444.5H3718" stroke="#778899" />
    <path d="M656.5 245.5H3718.5V1562.5H656.5Z" stroke="#fff" fill="none" />
    <path d="M3429 246H3449L3439 256Z" fill="#778899" />
    {PRICE_LABELS.map((label, i) => {
      const y = Math.round(301 + i * 66.44)
      return (
        <g key={label}>
          <path d={`M3718 ${y + 0.5}H3723`} stroke="#fff" />
          <text x="3724" y={y + 7} fill="#fff" fontSize="18">{label}</text>
        </g>
      )
    })}
    <rect x="3721" y="433" width="78" height="23" fill="#778899" />
    <text x="3727" y="451" fill="#000" fontSize="18">1.35660</text>
    {TIME_LABELS.map((label, i) => {
      const tick = i === 0 ? 655 : 783 + (i - 1) * 128.05
      return (
        <g key={label}>
          <path d={`M${Math.round(tick) + 0.5} 1562V1568`} stroke="#fff" />
          <text x={i === 0 ? 654 : Math.round(tick)} y="1586" fill="#fff" fontSize="18" letterSpacing="0.3">{label}</text>
        </g>
      )
    })}
  </ChartSvg>
)

const TopBar = () => (
  <>
    <TopStrip />
    <MenuBar>
      <MenuItem $w={51}><Logo /></MenuItem>
      <MenuItem $w={79}>File</MenuItem>
      <MenuItem $w={93}>View</MenuItem>
      <MenuItem $w={101}>Insert</MenuItem>
      <MenuItem $w={108}>Charts</MenuItem>
      <MenuItem $w={98}>Tools</MenuItem>
      <MenuItem $w={129}>Window</MenuItem>
      <MenuItem $w={60}>Help</MenuItem>
      <WindowControls>
        <MinimizeIcon />
        <RestoreIcon />
        <CloseIcon />
      </WindowControls>
    </MenuBar>
    <ToolbarRow>
      <Toolbar $w={1507}>
        <Grip $after={7} />
        <Tool><LineChartIcon /></Tool>
        <DropArrow $l={3} $r={8} />
        <Tool><MonitorIcon /></Tool>
        <DropArrow $l={2} $r={8} />
        <Tool><CoinIcon /></Tool>
        <Separator $l={2} $r={3} />
        <Tool><IdeLabel>IDE</IdeLabel></Tool>
        <Tool><BagIcon /></Tool>
        <Tool><SignalIcon /></Tool>
        <Tool><CloudIcon /></Tool>
        <Tool><FingerIcon /></Tool>
        <Separator />
        <TextTool $w={200} $pl={17}><AlgoBox />Algo Trading</TextTool>
        <TextTool $w={181} $pl={14}><OrderIcon />New Order</TextTool>
        <Separator $l={3} $r={3} />
        <Tool $w={59} $active><BarsIcon /></Tool>
        <Tool><CandleIcon /></Tool>
        <Tool><WaveIcon /></Tool>
        <Separator />
        <Tool $ml={2}><ZoomIcon plus /></Tool>
        <Tool><ZoomIcon /></Tool>
        <Tool><TileIcon /></Tool>
        <Separator $l={2} $r={3} />
        <Tool $w={58} $active><ShiftIcon /></Tool>
        <Tool $w={58} $ml={2} $active><ShiftIcon back /></Tool>
        <Separator $l={3} $r={2} />
        <Tool><ShotIcon /></Tool>
      </Toolbar>
      <Actions>
        <SearchIcon />
        <UserWrap>
          <UserIcon />
          <Badge>1</Badge>
        </UserWrap>
        <LvlIcon />
        <Level><LevelFill style={{ width: "61%" }} /></Level>
      </Actions>
    </ToolbarRow>
    <ToolbarStack $w={640}>
      <Toolbar $w={592}>
        <Grip $after={9} />
        <Tool $w={59} $active><CursorIcon /></Tool>
        <Tool><CrossIcon /></Tool>
        <Separator $l={1} $r={2} />
        <Tool><VLineIcon /></Tool>
        <Tool><HLineIcon /></Tool>
        <Tool><TrendIconTool /></Tool>
        <Tool><ChannelIcon /></Tool>
        <Tool><TIcon /></Tool>
        <Tool><RectIcon /></Tool>
        <Tool><ShapesIcon /></Tool>
        <DropArrow $l={2} $r={0} />
      </Toolbar>
    </ToolbarStack>
    <ToolbarStack $w={622} $last>
      <Toolbar $w={622} $h={63}>
        <Grip $after={9} />
        {["M2", "M4", "M5", "M15", "M30", "H1", "H4", "D1", "W1", "MN"].map(tf => (
          <TimeTool key={tf} $active={tf === "M15"}>{tf}</TimeTool>
        ))}
      </Toolbar>
    </ToolbarStack>
  </>
)

const WATCH = [
  { bg: "#00bfff", mark: "up", name: "US500", cells: [["5469....", "#0000ff"], ["5469....", "#0000ff"], ["5483...."], ["5465...."], ["31"]] },
  { bg: "#ffff44", mark: "up", name: "AUDUSD", cells: [["0.666...", "#0000ff"], ["0.666...", "#0000ff"], ["0.666...", "#0000ff"], ["0.664...", "#0000ff"], ["8"]] },
  { bg: "#b0e0e6", mark: "up", name: "Sugar_V4", cells: [["18.79"], ["18.85"], ["19.00"], ["18.58"], ["6"]] },
  { bg: "#e0f0ff", mark: "down", name: "USDCAD", cells: [["1.356...", "#ff0000"], ["1.356...", "#ff0000"], ["1.357...", "#0000ff"], ["1.354...", "#0000ff"], ["9"]] },
  { bg: "#fff", mark: "dot", name: "UST30Y_Z4", cells: [["125.97"], ["126.00"], ["126.12"], ["125.84"], ["3"]] },
]

const MarketWatch = () => (
  <>
    <PanelTitle $h={26}>
      <TitleBar>Market Watch: 07:23:26</TitleBar>
      <CloseMark>✕</CloseMark>
    </PanelTitle>
    <WatchBox>
      <WatchRow $h={40} $head>
        <WatchCell $left>Symbol</WatchCell>
        <WatchCell>Bid</WatchCell>
        <WatchCell>Ask</WatchCell>
        <WatchCell>High</WatchCell>
        <WatchCell>Low</WatchCell>
        <WatchCell $end $pr={7}>Spr...</WatchCell>
      </WatchRow>
      {WATCH.map(row => (
        <WatchRow key={row.name} $bg={row.bg}>
          <WatchCell $left $pl={7}>
            <TrendIcon><ArrowMark kind={row.mark} /></TrendIcon>
            {row.name}
          </WatchCell>
          {row.cells.map(([text, color], i) => (
            <WatchCell key={i} $c={color} $end={i === 4} $pr={i === 4 ? 10 : 7}>{text}</WatchCell>
          ))}
        </WatchRow>
      ))}
      <AddRow>
        <AddPlus><PlusMark /></AddPlus>
        click to add...
        <AddCount>5 / 2053</AddCount>
      </AddRow>
    </WatchBox>
    <TabStrip>
      <Tab $w={129} $pl={19} $ml={4} $ls={0.1} $active>Symbols</Tab>
      <Tab $w={112} $ls={0.1} $sep>Details</Tab>
      <Tab $w={121} $ls={0.1} $sep>Trading</Tab>
      <Tab $w={100} $ls={0.1}>Ticks</Tab>
      <TabFill />
    </TabStrip>
    <PanelGap />
  </>
)

const Leaf = ({ lead, pl, toggle, open, icon, children }) => (
  <TreeRow>
    <TreeLead $w={lead} $pl={pl}>
      {toggle && <Toggle><ToggleMark open={open} /></Toggle>}
      <Connector />
    </TreeLead>
    <TreeIcon>{icon}</TreeIcon>
    {children}
  </TreeRow>
)

const Navigator = () => (
  <>
    <PanelTitle $h={25}>
      <TitleBar>Navigator</TitleBar>
      <CloseMark>✕</CloseMark>
    </PanelTitle>
    <TreeBox>
      <TreeList>
        <Leaf lead={47} pl={14} toggle open icon={<CapIcon />}>Expert Advisors</Leaf>
        <Branch>
          <Leaf lead={86} pl={52} toggle icon={<FolderIcon />}>Advisors</Leaf>
          <Leaf lead={86} pl={52} toggle icon={<FolderIcon />}>Examples</Leaf>
          <Leaf lead={86} pl={52} toggle icon={<FolderIcon />}>Free Robots</Leaf>
        </Branch>
        <Leaf lead={47} pl={14} toggle open icon={<ScrollIcon />}>Scripts</Leaf>
        <Branch>
          <Leaf lead={86} pl={52} toggle icon={<FolderIcon />}>Examples</Leaf>
        </Branch>
        <Leaf lead={47} pl={22} icon={<GearIcon />}>Services</Leaf>
        <Leaf lead={47} pl={14} toggle open icon={<BagIcon s={28} />}>Market</Leaf>
        <Branch>
          <Leaf lead={86} pl={62} icon={<CapIcon />}>Experts</Leaf>
          <Leaf lead={86} pl={62} icon={<IndicatorIcon />}>Indicators</Leaf>
          <Leaf lead={86} pl={62} icon={<BankIcon />}>Libraries</Leaf>
          <Leaf lead={86} pl={62} icon={<Wrench size={27} color={BLUE} fill={SKY} strokeWidth={2} />}>Utilities</Leaf>
          <Leaf lead={86} pl={62} icon={<StarIcon s={30} />}>Favorites</Leaf>
          <Leaf lead={86} pl={62} icon={<CheckIcon />}>My Purchases</Leaf>
          <Leaf lead={86} pl={62} icon={<ListIcon />}>How It Works</Leaf>
        </Branch>
        <Leaf lead={47} pl={14} toggle icon={<SignalIcon s={30} />}>Signals</Leaf>
      </TreeList>
      <ScrollBar $w={33}>
        <ScrollEnd $h={38}><UpIcon /></ScrollEnd>
        <ScrollTrack>
          <ScrollThumb $top={167} $h={347} />
        </ScrollTrack>
        <ScrollEnd $h={36}><UpIcon dir="down" /></ScrollEnd>
      </ScrollBar>
    </TreeBox>
    <TabStrip $h={37}>
      <Tab $w={139} $pl={19} $ml={4} $ls={0.1} $pt={1} $active>Common</Tab>
      <Tab $w={120} $ls={0.1} $pt={1}>Favorites</Tab>
      <TabFill />
    </TabStrip>
  </>
)

const TradeOverlay = () => (
  <TradePanel>
    <TradeTop>
      <SideButton><SideLabel>SELL</SideLabel></SideButton>
      <Spinner>
        <SpinButton><Caret /></SpinButton>
        <SpinValue>1.00</SpinValue>
        <SpinButton><Caret up /></SpinButton>
      </Spinner>
      <SideButton><SideLabel>BUY</SideLabel></SideButton>
    </TradeTop>
    <TradePrices>
      <PriceBox $w={184}>
        <PriceSmall>1.35</PriceSmall>
        <PriceBig>65</PriceBig>
        <PriceSup>6</PriceSup>
      </PriceBox>
      <PriceBox $w={183}>
        <PriceSmall>1.35</PriceSmall>
        <PriceBig>66</PriceBig>
        <PriceSup>5</PriceSup>
      </PriceBox>
    </TradePrices>
  </TradePanel>
)

const CODEBASE = [
  { icon: "ind", name: "Swing High Low and Fibonacci Retracement Indicator", desc: "This is an indicator that combines swing high/low and Fibonacci Retracement to identify potential buying zones.", date: "2024.09.09" },
  { icon: "ind", name: "Engulfing Indicator", desc: "This is an indicator that helps identify Engulfing candle patterns.", date: "2024.09.09" },
  { icon: "ind", name: "Fair Value Gap (FVG) Indicator", desc: "The Fair Value Gap (FVG) Indicator identifies price gaps that occur when there is an imbalance between buying and selling pressure. It highlights areas where price is likely to return to fill the gap, providing potential trade entry points based on market...", date: "2024.09.09" },
  { icon: "script", name: "Max trade volume checker for your trading account (Scri...", desc: "A script which when run displays the maximum lot size permitted on the asset.", date: "2024.09.06" },
  { icon: "script", name: "buysell+sl+tp", desc: "script to open a buy position at the current price in the MT5 window with a specified stop loss (in pips) and take profit (in pips)", date: "2024.09.05", low: true },
  { icon: "cap", name: "Max trade volume checker for your trading account", desc: "A dialog to display the maximum lot size permitted on the underlying asset for different types of orders (buy, sell, pending buy, and pending sell).", date: "2024.09.02" },
  { icon: "ind", name: "", desc: "", date: "" },
]
const ROW_ICON = {
  ind: <IndicatorIcon s={28} />,
  script: <ScrollIcon s={28} />,
  cap: <CapIcon s={30} />,
}

const Toolbox = () => (
  <ToolboxArea>
    <ToolboxSide>
      <SideClose>X</SideClose>
      <SideTitle>Toolbox</SideTitle>
    </ToolboxSide>
    <ToolboxBody>
      <TableArea>
        <ToolboxTable>
          <GridRow $h={41} $head>
            <GridCell $head $pl={7}>Name</GridCell>
            <GridCell $head>Description</GridCell>
            <GridCell $head>Rating</GridCell>
            <GridCell $head $end $right $pr={9}>Date<SortArrow /></GridCell>
          </GridRow>
          {CODEBASE.map((row, i) => (
            <GridRow key={i} $alt={i % 2 === 1}>
              <GridCell>
                <RowIcon>{ROW_ICON[row.icon]}</RowIcon>
                {row.name}
              </GridCell>
              <GridCell>{row.desc}</GridCell>
              <GridCell>
                <Stars>
                  <StarIcon /><StarIcon /><StarIcon /><StarIcon />
                  <StarIcon kind={row.low ? "empty" : "half"} />
                </Stars>
              </GridCell>
              <GridCell $end $right $pr={9}>{row.date}</GridCell>
            </GridRow>
          ))}
        </ToolboxTable>
        <ScrollBar $w={33}>
          <ScrollEnd $h={35}><UpIcon /></ScrollEnd>
          <ScrollTrack>
            <ScrollThumb $top={0} $h={34} />
          </ScrollTrack>
          <ScrollEnd $h={50}><UpIcon dir="down" /></ScrollEnd>
        </ScrollBar>
      </TableArea>
      <TabStrip $h={40}>
        <Tab $w={100} $sep>Trade</Tab>
        <Tab $w={136} $sep>Exposure</Tab>
        <Tab $w={115} $sep>History</Tab>
        <Tab $w={126} $sep>News<TabCount>94</TabCount></Tab>
        <Tab $w={141} $sep>Mailbox<TabCount>7</TabCount></Tab>
        <Tab $w={134} $sep>Calendar</Tab>
        <Tab $w={141} $sep>Company</Tab>
        <Tab $w={101} $sep>Alerts</Tab>
        <Tab $w={118}>Articles</Tab>
        <Tab $w={167} $active>Code Base<TabCount $s={18}>8</TabCount></Tab>
        <Tab $w={116} $sep>Experts</Tab>
        <Tab $w={116}>Journal</Tab>
        <TabFill>
          <ToolLinks>
            <ToolLink><BagIcon s={32} />Market</ToolLink>
            <ToolLink $ml={16}><SignalIcon s={32} />Signals</ToolLink>
            <ToolLink $ml={18}><CloudIcon s={32} />VPS</ToolLink>
            <ToolLink $ml={13}><ChipIcon />Tester</ToolLink>
          </ToolLinks>
        </TabFill>
      </TabStrip>
    </ToolboxBody>
  </ToolboxArea>
)

const Status = () => (
  <StatusBar>
    <StatusCell $first $pl={4}>For Help, press F1</StatusCell>
    <StatusCell $w={267}>Default</StatusCell>
    <StatusCell $w={200}>2024.09.05 12:15</StatusCell>
    <StatusCell $w={142}>O: 1.35056</StatusCell>
    <StatusCell $w={141}>H: 1.35093</StatusCell>
    <StatusCell $w={135}>L: 1.35047</StatusCell>
    <StatusCell $w={139}>C: 1.35088</StatusCell>
    <StatusCell $w={135} />
    <StatusCell $w={237} $pl={11}>
      <SignalBars />
      102 / 1 Kb
      <SizeGripWrap><SizeGrip /></SizeGripWrap>
    </StatusCell>
  </StatusBar>
)

export default function App() {
  return (
    <>
      <GlobalStyle />
      <Window>
        <TopBar />
        <Main>
          <Sidebar>
            <MarketWatch />
            <Navigator />
          </Sidebar>
          <ChartColumn>
            <ChartPane>
              <PriceChart />
              <ChartTitle>
                <FlagIcon />
                <SaveIcon />
                USDCAD, M15:  US Dollar vs Canadian Dollar
              </ChartTitle>
              <TradeOverlay />
            </ChartPane>
            <ChartTabs>
              <Tab $w={223} $pl={24} $sep>UST30Y_Z4,Daily</Tab>
              <Tab $w={202} $pl={22}>Sugar_V4,Daily</Tab>
              <Tab $w={187} $pl={21} $active>USDCAD,M15</Tab>
              <TabFill>
                <NavArrows>
                  <SideArrow left />
                  <SideArrow />
                </NavArrows>
              </TabFill>
            </ChartTabs>
          </ChartColumn>
        </Main>
        <Toolbox />
        <Status />
        <BottomEdge><BottomDark /></BottomEdge>
      </Window>
    </>
  )
}
